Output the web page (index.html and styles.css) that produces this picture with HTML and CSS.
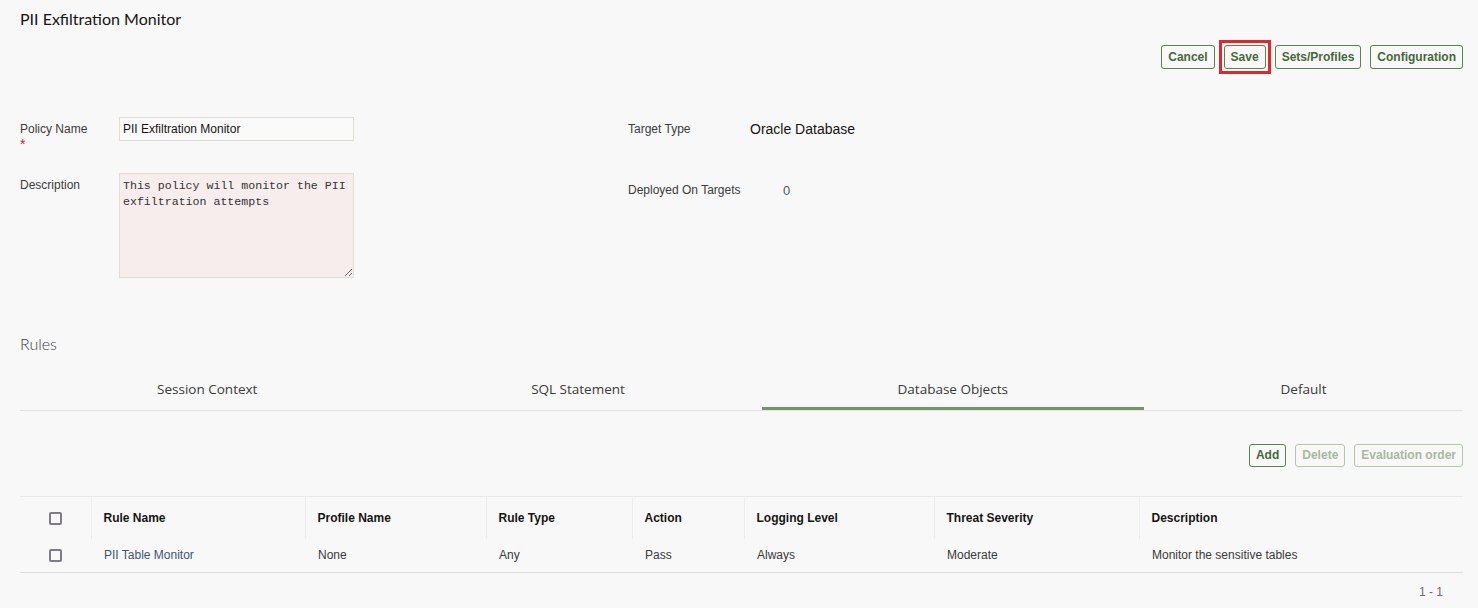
FILE: index.html
```html
<!DOCTYPE html>
<html>
<head>
<meta charset="utf-8">
<link rel="stylesheet" href="styles.css">
</head>
<body>
<div class="page">
  <h1 class="title">PII Exfiltration Monitor</h1>
  <div class="toolbar">
    <button class="btn">Cancel</button>
    <button class="btn btn-highlight">Save</button>
    <button class="btn">Sets/Profiles</button>
    <button class="btn">Configuration</button>
  </div>

  <div class="form">
    <div class="form-col left">
      <div class="field field-name">
        <div class="label">Policy Name<span class="req">*</span></div>
        <input class="input" type="text" value="PII Exfiltration Monitor">
      </div>
      <div class="field">
        <div class="label">Description</div>
        <textarea class="textarea">This policy will monitor the PII exfiltration attempts</textarea>
      </div>
    </div>
    <div class="form-col right">
      <div class="info info-type">
        <div class="label">Target Type</div>
        <div class="value-lg">Oracle Database</div>
      </div>
      <div class="info info-deployed">
        <div class="label">Deployed On Targets</div>
        <div class="value-num">0</div>
      </div>
    </div>
  </div>

  <h2 class="section">Rules</h2>
  <div class="tabs">
    <div class="tab">Session Context</div>
    <div class="tab">SQL Statement</div>
    <div class="tab active">Database Objects</div>
    <div class="tab">Default</div>
  </div>

  <div class="actions">
    <button class="btn btn-sm">Add</button>
    <button class="btn btn-sm disabled">Delete</button>
    <button class="btn btn-sm disabled">Evaluation order</button>
  </div>

  <table class="grid">
    <colgroup>
      <col class="c-chk">
      <col class="c-rule">
      <col class="c-profile">
      <col class="c-type">
      <col class="c-action">
      <col class="c-log">
      <col class="c-sev">
      <col>
    </colgroup>
    <thead>
      <tr>
        <th class="chk"><span class="checkbox"></span></th>
        <th>Rule Name</th>
        <th>Profile Name</th>
        <th>Rule Type</th>
        <th>Action</th>
        <th>Logging Level</th>
        <th>Threat Severity</th>
        <th>Description</th>
      </tr>
    </thead>
    <tbody>
      <tr>
        <td class="chk"><span class="checkbox"></span></td>
        <td class="link">PII Table Monitor</td>
        <td>None</td>
        <td>Any</td>
        <td>Pass</td>
        <td>Always</td>
        <td>Moderate</td>
        <td>Monitor the sensitive tables</td>
      </tr>
    </tbody>
  </table>
  <div class="pager">1 - 1</div>
</div>
</body>
</html>
```

FILE: styles.css
```css
html, body {
  margin: 0;
  padding: 0;
  background: #f8f8f8;
}
body {
  font-family: "Liberation Sans", Arial, sans-serif;
  color: #161513;
}
.page {
  padding: 8px 15px 0 20px;
}
.title {
  margin: 0;
  font-family: Lato, "Open Sans", sans-serif;
  font-weight: 400;
  font-size: 16px;
  line-height: 22px;
  color: #161513;
}
.toolbar {
  display: flex;
  justify-content: flex-end;
  gap: 9px;
  margin-top: 15px;
}
.btn {
  position: relative;
  font-family: "Liberation Sans", Arial, sans-serif;
  font-weight: bold;
  font-size: 12px;
  color: #46683a;
  background: transparent;
  border: 1px solid #5b7f4d;
  border-radius: 3px;
  height: 24px;
  padding: 0 6px;
  line-height: 22px;
  margin: 0;
}
.btn-highlight::after {
  content: "";
  position: absolute;
  left: -6px;
  right: -6px;
  top: -6px;
  bottom: -6px;
  border: 3px solid #e3262b;
}
.btn-sm {
  height: 23px;
  line-height: 21px;
}
.btn.disabled {
  color: #a4bb9c;
  border-color: #b2c8aa;
}
.form {
  display: flex;
  margin-top: 48px;
}
.form-col.left {
  width: 608px;
  display: flex;
  flex-direction: column;
  gap: 32px;
}
.field {
  display: flex;
}
.field-name {
  height: 24px;
}
.label {
  font-size: 12px;
  color: #3b3b3b;
  line-height: 14px;
}
.field .label {
  width: 99px;
  padding-top: 5px;
}
.req {
  display: block;
  color: #e0141e;
  font-size: 14px;
  line-height: 12px;
  margin-top: 2px;
}
.input {
  width: 235px;
  height: 24px;
  box-sizing: border-box;
  border: 1px solid #dedcd3;
  background: #fafafa;
  font-family: "Liberation Sans", Arial, sans-serif;
  font-size: 12px;
  color: #161513;
  padding: 0 3px;
  margin: 0;
}
.textarea {
  width: 235px;
  height: 105px;
  box-sizing: border-box;
  border: 1px solid #dedcd3;
  background: #f7eded;
  font-family: "Liberation Mono", "DejaVu Sans Mono", monospace;
  font-size: 11.6px;
  line-height: 16px;
  color: #333;
  padding: 4px 3px;
  margin: 0;
  resize: vertical;
}
.form-col.right {
  display: flex;
  flex-direction: column;
  gap: 37px;
}
.info {
  display: flex;
  align-items: center;
  height: 24px;
}
.info-type .label { width: 122px; }
.info-deployed .label { width: 155px; }
.value-lg {
  font-size: 14px;
  color: #161513;
}
.value-num {
  font-size: 13px;
  color: #4b5a68;
}
.section {
  margin: 56px 0 0 0;
  font-family: Lato, "Open Sans", sans-serif;
  font-weight: 300;
  font-size: 16px;
  line-height: 20px;
  color: #3f3f3f;
}
.tabs {
  display: grid;
  grid-template-columns: 374.5fr 367fr 382.5fr 319fr;
  margin-top: 16px;
  border-bottom: 1px solid #e3e3e3;
}
.tab {
  text-align: center;
  font-family: "Open Sans", Lato, sans-serif;
  font-size: 13.5px;
  color: #3a3a3a;
  height: 40px;
  line-height: 38px;
  box-sizing: border-box;
  border-bottom: 3px solid transparent;
}
.tab.active {
  border-bottom-color: #6b9863;
}
.actions {
  display: flex;
  justify-content: flex-end;
  gap: 9px;
  margin-top: 33px;
}
.grid {
  width: 100%;
  margin-top: 29px;
  border-collapse: collapse;
  table-layout: fixed;
  font-size: 12px;
}
.c-chk { width: 71px; }
.c-rule { width: 214px; }
.c-profile { width: 181px; }
.c-type { width: 146px; }
.c-action { width: 112px; }
.c-log { width: 190px; }
.c-sev { width: 205px; }
.grid thead tr {
  border-top: 1px solid #e9e9e9;
}
.grid th {
  text-align: left;
  font-weight: bold;
  color: #161513;
  height: 42px;
  padding: 0 12px;
  border-left: 1px solid #ececec;
  box-sizing: border-box;
}
.grid th.chk, .grid td.chk {
  border-left: none;
  text-align: center;
  padding: 0;
}
.grid td {
  height: 33px;
  padding: 0 12px 0 13px;
  color: #3a3a3a;
}
.grid tbody tr {
  border-bottom: 1px solid #dedede;
}
.grid td.link {
  color: #3c5770;
}
.checkbox {
  display: inline-block;
  width: 13px;
  height: 13px;
  box-sizing: border-box;
  border: 2px solid #7e7b86;
  border-radius: 2px;
  vertical-align: middle;
}
.pager {
  text-align: right;
  padding-right: 20px;
  font-size: 12px;
  color: #6b6b6b;
  margin-top: 12px;
}
```
